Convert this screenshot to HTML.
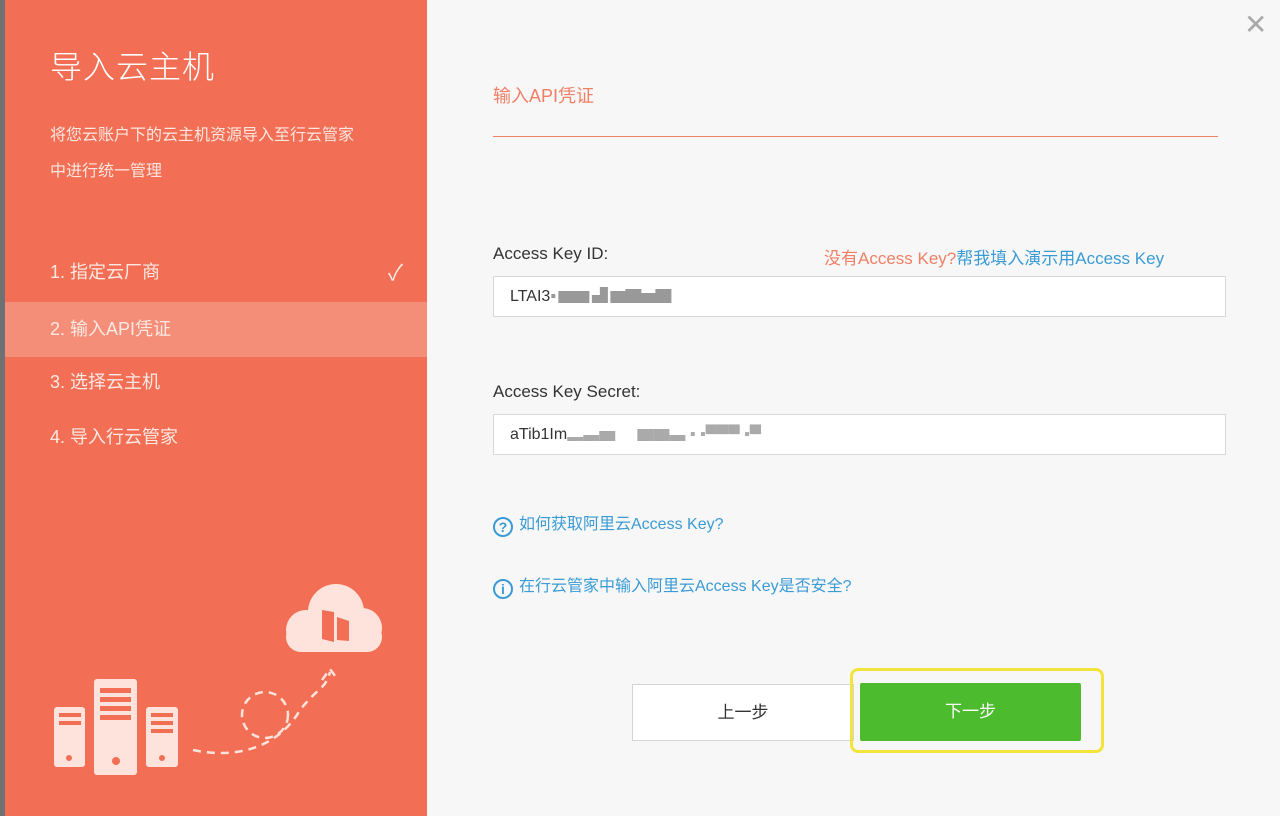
<!DOCTYPE html>
<html><head><meta charset="utf-8"><style>
*{margin:0;padding:0;box-sizing:border-box}
body{width:1280px;height:816px;overflow:hidden;background:#f7f7f7;font-family:"Liberation Sans","Noto Sans CJK SC",sans-serif;position:relative}
.strip{position:absolute;left:0;top:0;width:5px;height:816px;background:#6d7174}
.left{position:absolute;left:5px;top:0;width:422px;height:816px;background:#f26f55;color:#fff}
.t{position:absolute;left:45px;top:42px;font-size:32px;font-weight:300;letter-spacing:1px}
.d{position:absolute;left:45px;top:118px;font-size:16px;line-height:36px;color:#fde6e0}
.step{position:absolute;left:0;width:422px;height:55px;line-height:55px;padding-left:45px;font-size:18px;color:#fde9e4}
.act{background:#f48e78}
.ck{position:absolute;right:24px;top:0;font-size:22px}
.abs{position:absolute}
.lbl{font-size:17px;color:#333}
.inp{position:absolute;left:493px;width:733px;height:41px;background:#fff;border:1px solid #d8d8d8;font-size:16px;line-height:39px;padding-left:16px;color:#333}
.lk{font-size:16px;color:#3a9bd5}
.ic{display:inline-block;width:20px;height:20px;border:2px solid #3a9bd5;border-radius:50%;text-align:center;line-height:16px;font-size:14px;font-weight:bold;vertical-align:-3px;margin-right:6px}
</style></head><body>
<div class="strip"></div>
<div class="left">
<div class="t">导入云主机</div>
<div class="d">将您云账户下的云主机资源导入至行云管家<br>中进行统一管理</div>
<div class="step" style="top:245px">1. 指定云厂商<span class="ck">✓</span></div>
<div class="step act" style="top:302px">2. 输入API凭证</div>
<div class="step" style="top:355px">3. 选择云主机</div>
<div class="step" style="top:410px">4. 导入行云管家</div>
<svg class="abs" style="left:-5px;top:560px" width="430" height="256" viewBox="0 0 430 256">
<g fill="#fde3dc">
<circle cx="306" cy="70" r="20"/>
<circle cx="336" cy="52" r="28"/>
<circle cx="362" cy="68" r="20"/>
<rect x="286" y="62" width="96" height="30" rx="15"/>
<rect x="54" y="147" width="31" height="60" rx="3"/>
<rect x="94" y="119" width="43" height="96" rx="3"/>
<rect x="146" y="147" width="32" height="60" rx="3"/>
</g>
<g fill="#f26f55">
<rect x="59" y="153" width="22" height="4"/><rect x="59" y="161" width="22" height="4"/>
<rect x="100" y="128" width="31" height="5"/><rect x="100" y="137" width="31" height="5"/><rect x="100" y="146" width="31" height="5"/><rect x="100" y="155" width="31" height="5"/>
<rect x="151" y="153" width="22" height="4"/><rect x="151" y="161" width="22" height="4"/><rect x="151" y="169" width="22" height="4"/>
<circle cx="69" cy="198" r="3"/><circle cx="116" cy="201" r="4"/><circle cx="162" cy="198" r="3"/>
<path d="M322 50 l12 2 v30 l-12-3z M337 57 l12 4 v20 l-12-1z"/>
</g>
<g fill="none" stroke="#fde3dc" stroke-width="2.5" stroke-dasharray="8 6">
<path d="M193 190 C240 200 280 185 300 150 C320 125 325 130 330 112"/>
<circle cx="265" cy="155" r="23"/>
<path d="M322 120 l8-11 l8 11"/>
</g>
</svg>
</div>
<div class="abs" style="left:1244px;top:8px;font-size:28px;color:#aaa">✕</div>
<div class="abs" style="left:493px;top:82px;font-size:18px;color:#f07f66">输入API凭证</div>
<div class="abs" style="left:493px;top:136px;width:725px;height:1px;background:#f07f66"></div>
<div class="abs lbl" style="left:493px;top:244px">Access Key ID:</div>
<div class="abs" style="left:824px;top:244px;font-size:17px"><span style="color:#f07f66">没有Access Key?</span><span style="color:#3a9bd5">帮我填入演示用Access Key</span></div>
<div class="inp" style="top:276px">LTAI3<span style="color:#999;letter-spacing:-1px">▪ ▆▆ ▟ ▆▇▅▇</span></div>
<div class="abs lbl" style="left:493px;top:382px">Access Key Secret:</div>
<div class="inp" style="top:414px">aTib1Im<span style="color:#aaa">▂▃▅   &nbsp; &nbsp; ▆▆▃ ▪ ▪▀▀▀ ▪▀</span></div>
<div class="abs lk" style="left:493px;top:510px"><span class="ic">?</span>如何获取阿里云Access Key?</div>
<div class="abs lk" style="left:493px;top:572px"><span class="ic">i</span>在行云管家中输入阿里云Access Key是否安全?</div>
<div class="abs" style="left:632px;top:684px;width:222px;height:57px;background:#fff;border:1px solid #d5d5d5;text-align:center;line-height:55px;font-size:17px;color:#333">上一步</div>
<div class="abs" style="left:850px;top:668px;width:254px;height:85px;border:3px solid #f3e43c;border-radius:8px"></div>
<div class="abs" style="left:860px;top:683px;width:221px;height:58px;background:#4cbb2d;border-radius:2px;text-align:center;line-height:58px;font-size:17px;color:#fff">下一步</div>
</body></html>
